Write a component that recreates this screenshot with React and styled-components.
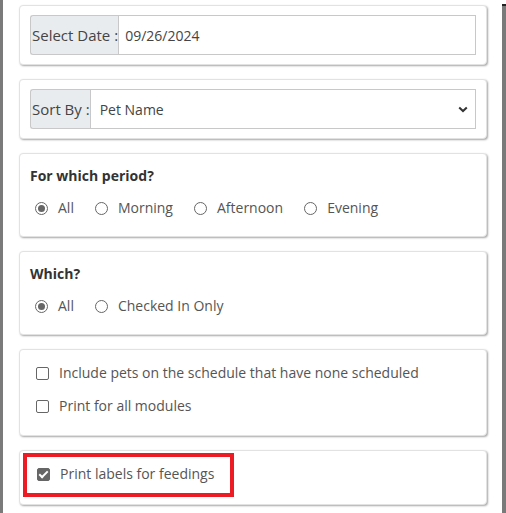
import React, { useState } from 'react';
import styled, { createGlobalStyle } from 'styled-components';

const GlobalStyle = createGlobalStyle`
  html, body {
    margin: 0;
    padding: 0;
    background: #fff;
  }
  body {
    font-family: "Open Sans", "Liberation Sans", sans-serif;
    font-size: 14px;
    color: #444;
  }
`;

export default function App() {
  const [period, setPeriod] = useState('all');
  const [which, setWhich] = useState('all');
  const [includeNone, setIncludeNone] = useState(false);
  const [allModules, setAllModules] = useState(false);
  const [labels, setLabels] = useState(true);

  return (
    <>
      <GlobalStyle />
      <Frame>
        <Strip side="left" />
        <Panel>
          <Card>
            <InputGroup>
              <Addon>Select Date :</Addon>
              <TextInput defaultValue="09/26/2024" />
            </InputGroup>
          </Card>

          <Card>
            <InputGroup>
              <Addon>Sort By :</Addon>
              <SelectBox defaultValue="pet">
                <option value="pet">Pet Name</option>
                <option value="owner">Owner Name</option>
              </SelectBox>
            </InputGroup>
          </Card>

          <Card tall>
            <Title>For which period?</Title>
            <OptionRow>
              {[
                ['all', 'All'],
                ['morning', 'Morning'],
                ['afternoon', 'Afternoon'],
                ['evening', 'Evening'],
              ].map(([v, l]) => (
                <Option key={v}>
                  <Radio
                    name="period"
                    checked={period === v}
                    onChange={() => setPeriod(v)}
                  />
                  {l}
                </Option>
              ))}
            </OptionRow>
          </Card>

          <Card tall>
            <Title>Which?</Title>
            <OptionRow>
              {[
                ['all', 'All'],
                ['in', 'Checked In Only'],
              ].map(([v, l]) => (
                <Option key={v}>
                  <Radio
                    name="which"
                    checked={which === v}
                    onChange={() => setWhich(v)}
                  />
                  {l}
                </Option>
              ))}
            </OptionRow>
          </Card>

          <Card checks>
            <CheckLine>
              <Check checked={includeNone} onChange={() => setIncludeNone(!includeNone)} />
              Include pets on the schedule that have none scheduled
            </CheckLine>
            <CheckLine>
              <Check checked={allModules} onChange={() => setAllModules(!allModules)} />
              Print for all modules
            </CheckLine>
          </Card>

          <Card single>
            <Highlight>
              <CheckLine>
                <Check checked={labels} onChange={() => setLabels(!labels)} />
                Print labels for feedings
              </CheckLine>
            </Highlight>
          </Card>
        </Panel>
        <Strip side="right" />
      </Frame>
    </>
  );
}

const Frame = styled.div`
  display: flex;
  width: 506px;
  height: 513px;
  overflow: hidden;
`;

const Strip = styled.div`
  flex: 0 0 ${(p) => (p.side === 'left' ? '3px' : '4px')};
  background: #7a7a7a;
  border-top: ${(p) => (p.side === 'right' ? '2px solid #222' : 'none')};
  margin-top: ${(p) => (p.side === 'right' ? '4px' : '0')};
`;

const Panel = styled.div`
  flex: 1;
  display: flex;
  flex-direction: column;
  gap: 14px;
  padding: 5px 15px 0 16px;
`;

const Card = styled.div`
  background: #fff;
  border: 1px solid #e2e2e2;
  border-radius: 4px;
  box-shadow: 1px 1px 2px rgba(0, 0, 0, 0.35);
  padding: ${(p) =>
    p.tall
      ? '11px 10px 17px'
      : p.checks
      ? '12px 10px 18px'
      : p.single
      ? '0 2px 7px'
      : '9px 10px 9px'};
  display: flex;
  flex-direction: column;
  gap: ${(p) => (p.checks ? '11px' : '10px')};
`;

const InputGroup = styled.div`
  display: flex;
  height: 40px;
`;

const Addon = styled.span`
  display: flex;
  align-items: center;
  padding: 0 0 0 1px;
  background: #e9ecef;
  border: 1px solid #c8c8c8;
  border-right: none;
  border-radius: 3px 0 0 3px;
  color: #444;
  font-size: 15px;
  white-space: nowrap;
`;

const TextInput = styled.input`
  flex: 1;
  min-width: 0;
  border: 1px solid #c8c8c8;
  border-radius: 0;
  padding: 0 6px;
  font: inherit;
  color: #444;
  outline: none;
`;

const SelectBox = styled.select`
  flex: 1;
  min-width: 0;
  border: 1px solid #c8c8c8;
  border-radius: 0;
  padding: 0 30px 0 9px;
  font: inherit;
  color: #444;
  background: #fff
    url("data:image/svg+xml,%3Csvg xmlns='http://www.w3.org/2000/svg' width='10' height='7' viewBox='0 0 10 7'%3E%3Cpath d='M1.2 1.5l3.8 3.6 3.8-3.6' fill='none' stroke='%23333' stroke-width='2'/%3E%3C/svg%3E")
    no-repeat right 7px center;
  appearance: none;
  outline: none;
`;

const Title = styled.div`
  font-weight: 700;
  color: #333;
  font-size: 14px;
  line-height: 22px;
`;

const OptionRow = styled.div`
  display: flex;
  gap: 21px;
  padding-left: 5px;
`;

const Option = styled.label`
  display: flex;
  align-items: center;
  gap: 10px;
  color: #555;
  line-height: 22px;
  cursor: pointer;
`;

const Radio = styled.input.attrs({ type: 'radio' })`
  appearance: none;
  margin: 0;
  width: 13px;
  height: 13px;
  border: 1px solid #666;
  border-radius: 50%;
  display: grid;
  place-items: center;
  &:checked::after {
    content: '';
    width: 7px;
    height: 7px;
    border-radius: 50%;
    background: #666;
  }
`;

const CheckLine = styled.label`
  display: flex;
  align-items: center;
  gap: 10px;
  padding-left: 6px;
  color: #555;
  line-height: 22px;
  cursor: pointer;
`;

const Check = styled.input.attrs({ type: 'checkbox' })`
  appearance: none;
  margin: 0;
  width: 13px;
  height: 13px;
  border: 1px solid #666;
  border-radius: 2px;
  display: grid;
  place-items: center;
  &:checked {
    background: #666;
  }
  &:checked::after {
    content: '';
    width: 3px;
    height: 7px;
    border: solid #fff;
    border-width: 0 2px 2px 0;
    transform: translateY(-1px) rotate(45deg);
  }
`;

const Highlight = styled.div`
  align-self: flex-start;
  width: 199px;
  margin: 2px 0 0 1px;
  border: 4px solid #ed1c24;
  padding: 6px 0 8px 4px;
`;
